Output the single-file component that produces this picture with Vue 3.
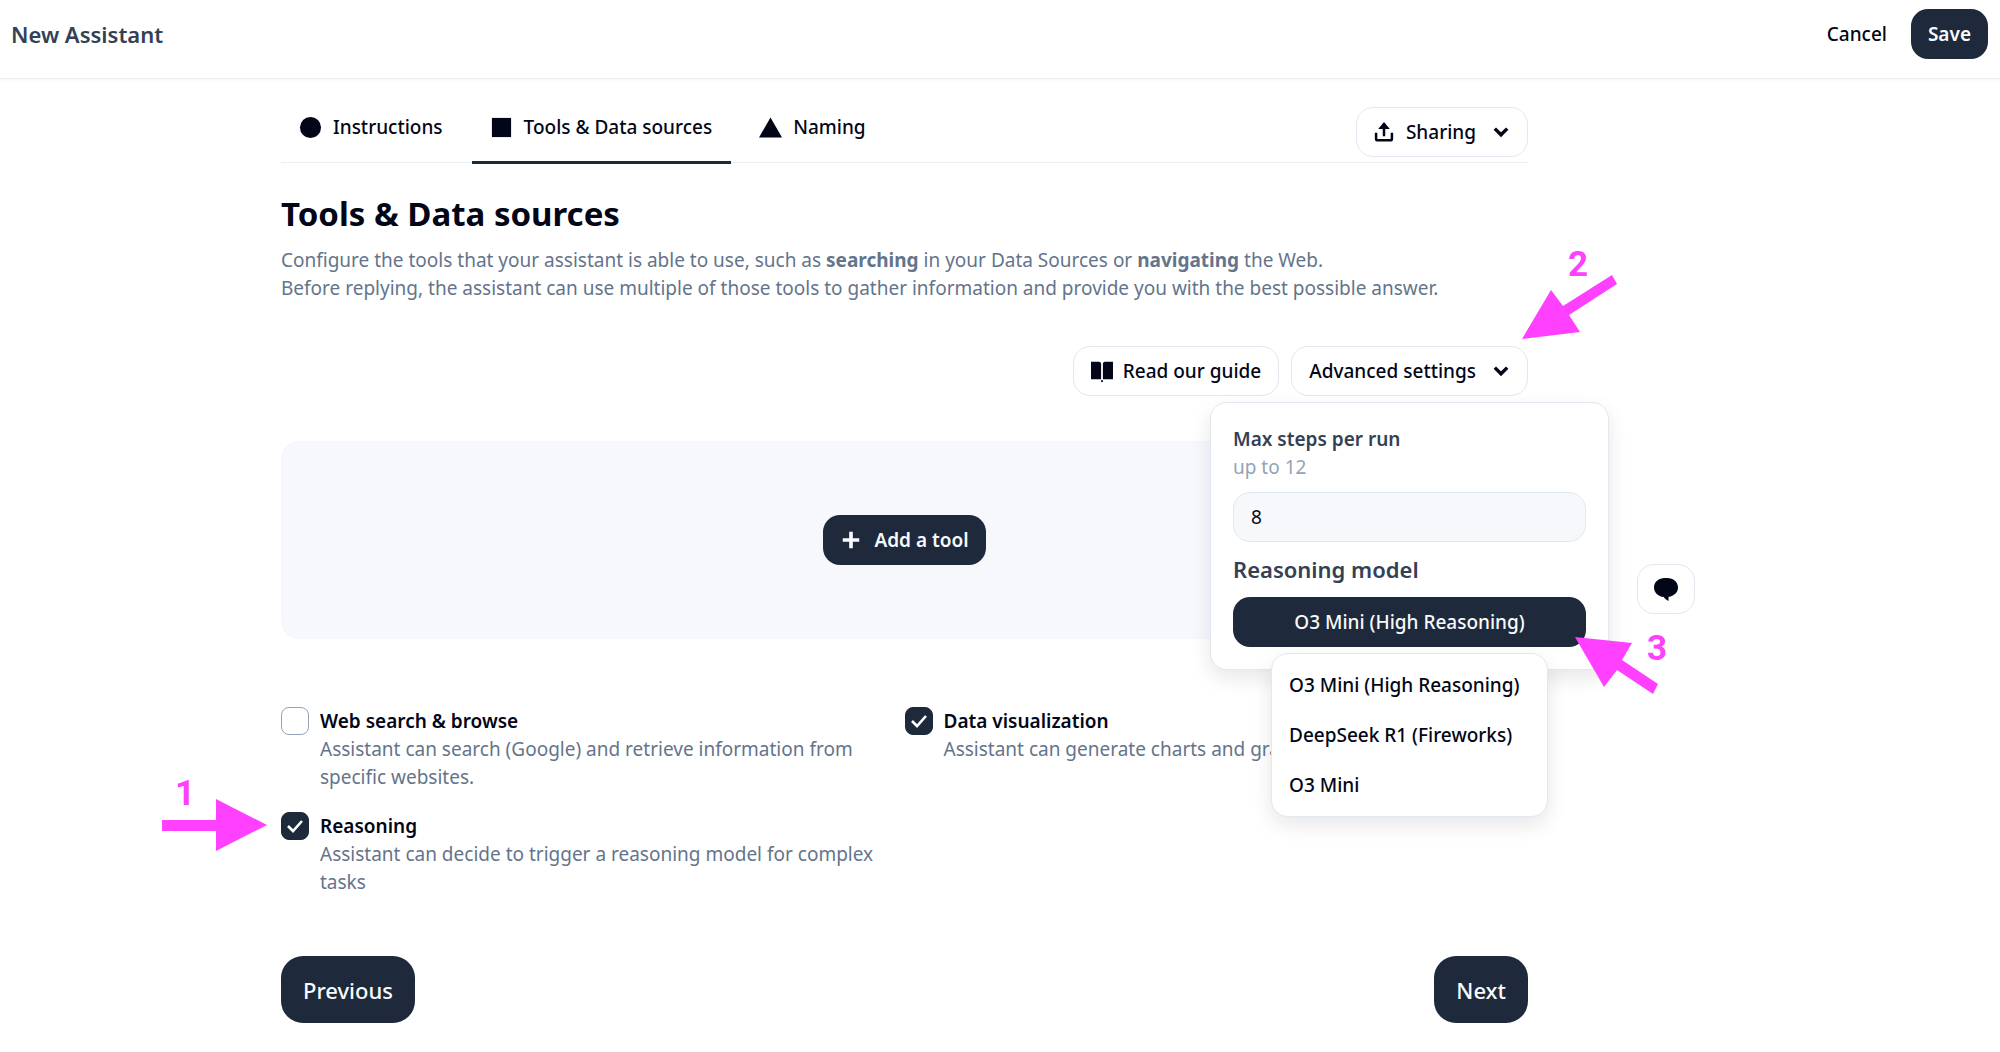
<script setup>
import { ref } from 'vue'

const tabs = [
  { id: 'instructions', label: 'Instructions' },
  { id: 'tools', label: 'Tools & Data sources' },
  { id: 'naming', label: 'Naming' },
]
const activeTab = ref('tools')

const capabilities = ref([
  {
    id: 'web',
    label: 'Web search & browse',
    text: 'Assistant can search (Google) and retrieve information from specific websites.',
    on: false,
  },
  {
    id: 'viz',
    label: 'Data visualization',
    text: 'Assistant can generate charts and graphs.',
    on: true,
  },
  {
    id: 'reasoning',
    label: 'Reasoning',
    text: 'Assistant can decide to trigger a reasoning model for complex tasks',
    on: true,
  },
])

const maxSteps = ref('8')
const models = ['O3 Mini (High Reasoning)', 'DeepSeek R1 (Fireworks)', 'O3 Mini']
const model = ref(models[0])
</script>

<template>
  <div class="page">
    <header class="topbar">
      <h2 class="topbar-title">New Assistant</h2>
      <div class="topbar-actions">
        <button type="button" class="btn-ghost">Cancel</button>
        <button type="button" class="btn btn-dark">Save</button>
      </div>
    </header>

    <div class="layout">
      <main class="main">
        <div class="tabbar">
          <nav class="tabs">
            <button
              v-for="t in tabs"
              :key="t.id"
              type="button"
              class="tab"
              :class="{ active: activeTab === t.id }"
              @click="activeTab = t.id"
            >
              <svg class="tab-icon" viewBox="0 0 24 24" aria-hidden="true">
                <circle v-if="t.id === 'instructions'" cx="12" cy="12" r="11" />
                <rect v-else-if="t.id === 'tools'" x="2" y="2" width="20" height="20" />
                <path v-else d="M12 1.500L24 22.500H0Z" />
              </svg>
              {{ t.label }}
            </button>
          </nav>
          <button type="button" class="btn btn-light">
            <svg class="share-icon" viewBox="0 0 24 24" aria-hidden="true">
              <path
                d="M12 17V6M2.500 13v7a2 2 0 0 0 2 2h15a2 2 0 0 0 2-2v-7"
                fill="none"
                stroke="currentColor"
                stroke-width="3"
              />
              <path d="M12 0L19 8.500H5Z" />
            </svg>
            Sharing
            <svg class="chevron" viewBox="0 0 16 16" aria-hidden="true">
              <path d="M2.500 5L8 10.500 13.500 5" />
            </svg>
          </button>
        </div>

        <section class="intro">
          <h1>Tools &amp; Data sources</h1>
          <p>
            Configure the tools that your assistant is able to use, such as <b>searching</b> in your
            Data Sources or <b>navigating</b> the Web.<br />
            Before replying, the assistant can use multiple of those tools to gather information and
            provide you with the best possible answer.
          </p>
        </section>

        <div class="toolbar">
          <button type="button" class="btn btn-light guide">
            <svg class="icon" viewBox="0 0 24 24" aria-hidden="true">
              <path
                d="M0 2h8.500a3 3 0 0 1 2.500 1.500V21H0zM24 2h-8.500a3 3 0 0 0-2.500 1.500V21h11zM11 22h2v2h-2z"
              />
            </svg>
            Read our guide
          </button>
          <div class="advanced">
            <button type="button" class="btn btn-light" aria-expanded="true">
              Advanced settings
              <svg class="chevron" viewBox="0 0 16 16" aria-hidden="true">
                <path d="M2.500 5L8 10.500 13.500 5" />
              </svg>
            </button>
            <div class="popover">
              <label class="field-title" for="max-steps">Max steps per run</label>
              <span class="hint">up to 12</span>
              <input id="max-steps" v-model="maxSteps" class="field" type="text" />
              <h3 id="model-title" class="model-title">Reasoning model</h3>
              <div class="picker">
                <button
                  type="button"
                  class="btn btn-dark picker-button"
                  aria-haspopup="menu"
                  aria-describedby="model-title"
                >
                  {{ model }}
                </button>
                <div class="menu" role="menu">
                  <button
                    v-for="m in models"
                    :key="m"
                    type="button"
                    role="menuitem"
                    class="menu-item"
                    @click="model = m"
                  >
                    {{ m }}
                  </button>
                </div>
                <div class="mark mark-three" aria-hidden="true">
                  <svg width="84" height="58" viewBox="0 0 84 58">
                    <path d="M0 0L57 6 47 23 83 47 78 57 42 33 29 50Z" />
                  </svg>
                  <span class="mark-number">3</span>
                </div>
              </div>
            </div>
            <div class="mark mark-two" aria-hidden="true">
              <svg width="96" height="65" viewBox="0 0 96 65">
                <path d="M0 64L29 15 41 31 90 0 95 9 47 40 58 57Z" />
              </svg>
              <span class="mark-number">2</span>
            </div>
          </div>
        </div>

        <section class="empty">
          <button type="button" class="btn btn-dark">
            <svg class="icon" viewBox="0 0 24 24" aria-hidden="true">
              <path d="M12 3v18M3 12h18" fill="none" stroke="currentColor" stroke-width="4" />
            </svg>
            Add a tool
          </button>
        </section>

        <section class="capabilities">
          <div v-for="c in capabilities" :key="c.id" class="capability">
            <span class="check">
              <input :id="c.id" v-model="c.on" type="checkbox" :aria-describedby="c.id + '-text'" />
              <svg v-if="c.on" viewBox="0 0 28 28" aria-hidden="true">
                <path d="M7 14l5 5L21 9" />
              </svg>
            </span>
            <div>
              <label :for="c.id">{{ c.label }}</label>
              <p :id="c.id + '-text'">{{ c.text }}</p>
            </div>
            <div v-if="c.id === 'reasoning'" class="mark mark-one" aria-hidden="true">
              <svg width="105" height="52" viewBox="0 0 105 52">
                <path d="M0 21H54V0L105 26 54 52V32H0Z" />
              </svg>
              <span class="mark-number">1</span>
            </div>
          </div>
        </section>

        <footer class="pager">
          <button type="button" class="btn-large">Previous</button>
          <button type="button" class="btn-large">Next</button>
        </footer>
      </main>

      <aside class="side">
        <button type="button" class="btn btn-light" aria-label="Open chat">
          <svg class="chat-icon" viewBox="0 0 24 24" aria-hidden="true">
            <path
              d="M11 1h2c6.500 0 11 4 11 9.500 0 5-4 8.500-9.500 9.500v4C12 22.800 10.500 21.500 9.800 20 4 19.500 0 15.500 0 10.500 0 5 4.500 1 11 1z"
            />
          </svg>
        </button>
      </aside>
    </div>
  </div>
</template>

<style>
body {
  margin: 0;
  background: #fff;
}
</style>

<style scoped>
.page {
  font-family: 'Noto Sans', 'Open Sans', sans-serif;
  font-size: 19px;
  line-height: 28px;
  color: #020617;
}
*,
*::before,
*::after {
  box-sizing: border-box;
}
h1,
h2,
h3,
p {
  margin: 0;
}
button,
input {
  font: inherit;
  color: inherit;
}
button {
  border: 0;
  background: none;
  padding: 0;
  cursor: pointer;
  white-space: nowrap;
}
svg {
  display: block;
  flex: none;
  fill: currentColor;
}

.topbar {
  display: flex;
  align-items: flex-start;
  justify-content: space-between;
  height: 79px;
  padding: 9px 12px 0 11px;
  border-bottom: 1px solid #eceef1;
  box-shadow: 0 1px 3px rgba(15, 23, 42, 0.04);
}
.topbar-title {
  font-size: 22px;
  line-height: 50px;
  font-weight: 600;
  color: #334155;
}
.topbar-actions {
  display: flex;
  align-items: center;
  gap: 24px;
}
.btn-ghost {
  font-weight: 500;
}

.btn {
  display: flex;
  align-items: center;
  justify-content: center;
  gap: 12px;
  height: 50px;
  padding: 0 17px;
  border-radius: 17px;
  font-weight: 500;
}
.btn-light {
  border: 1px solid #e2e8f0;
  background: #fff;
}
.btn-dark {
  background: #1e293b;
  color: #f8fafc;
  font-weight: 600;
}
.icon {
  width: 22px;
  height: 22px;
}
.share-icon {
  width: 20px;
  height: 20px;
}
.chevron {
  width: 18px;
  height: 18px;
  margin-left: 4px;
}
.chevron path {
  fill: none;
  stroke: currentColor;
  stroke-width: 3;
}

.layout {
  display: grid;
  grid-template-columns: 281fr 1247fr 472fr;
}
.main {
  grid-column: 2;
  min-width: 0;
  padding-top: 28px;
}
.tabbar {
  display: flex;
  justify-content: space-between;
  align-items: flex-start;
  height: 56px;
  border-bottom: 1px solid #e9eef5;
}
.tabs {
  display: flex;
  gap: 10px;
}
.tab {
  display: flex;
  align-items: center;
  gap: 11px;
  height: 57px;
  padding: 0 19px 14px 18px;
  border-bottom: 3px solid transparent;
  font-weight: 500;
}
.tab.active {
  border-color: #1e293b;
}
.tab-icon {
  width: 23px;
  height: 23px;
}

.intro h1 {
  margin-top: 27px;
  font-size: 33px;
  line-height: 48px;
  font-weight: 700;
}
.intro p {
  margin-top: 8px;
  color: #64748b;
}

.toolbar {
  display: flex;
  justify-content: flex-end;
  gap: 12px;
  margin-top: 44px;
}
.guide {
  gap: 10px;
}
.advanced,
.picker {
  position: relative;
}
.popover {
  position: absolute;
  z-index: 2;
  top: 56px;
  right: -81px;
  display: flex;
  flex-direction: column;
  width: 399px;
  padding: 22px;
  border: 1px solid #e2e8f0;
  border-radius: 17px;
  background: #fff;
  box-shadow: 0 8px 20px rgba(15, 23, 42, 0.1);
}
.field-title {
  font-weight: 600;
  color: #334155;
}
.hint {
  color: #94a3b8;
}
.field {
  width: 100%;
  height: 50px;
  margin-top: 11px;
  padding: 0 17px;
  border: 1px solid #e2e8f0;
  border-radius: 17px;
  background: #f6f8fc;
  outline: 0;
}
.model-title {
  margin: 13px 0 14px;
  font-size: 22px;
  line-height: 28px;
  font-weight: 600;
  color: #334155;
}
.picker-button {
  width: 100%;
  font-weight: 500;
}
.menu {
  position: absolute;
  z-index: 1;
  top: 56px;
  left: 38px;
  right: 38px;
  display: flex;
  flex-direction: column;
  padding: 6px 17px;
  border: 1px solid #e2e8f0;
  border-radius: 17px;
  background: #fff;
  box-shadow: 0 8px 20px rgba(15, 23, 42, 0.1);
}
.menu-item {
  height: 50px;
  text-align: left;
  font-weight: 500;
}

.empty {
  display: flex;
  align-items: center;
  justify-content: center;
  height: 198px;
  margin-top: 45px;
  border-radius: 17px;
  background: #f6f8fc;
}

.capabilities {
  display: grid;
  grid-template-columns: 1fr 1fr;
  row-gap: 21px;
  margin-top: 68px;
}
.capability {
  position: relative;
  display: flex;
  gap: 11px;
  padding-right: 24px;
}
.capability label {
  font-weight: 600;
}
.capability p {
  color: #64748b;
}
.check {
  position: relative;
  flex: none;
  width: 28px;
  height: 28px;
}
.check input {
  appearance: none;
  display: block;
  width: 28px;
  height: 28px;
  margin: 0;
  border: 1px solid #94a3b8;
  border-radius: 8px;
  background: #fff;
}
.check input:checked {
  border-color: #1e293b;
  background: #1e293b;
}
.check svg {
  position: absolute;
  inset: 0;
  pointer-events: none;
}
.check path {
  fill: none;
  stroke: #fff;
  stroke-width: 2.600;
}

.pager {
  display: flex;
  justify-content: space-between;
  margin-top: 60px;
  padding-bottom: 29px;
}
.btn-large {
  height: 67px;
  padding: 0 22px;
  border-radius: 22px;
  background: #1e293b;
  color: #f8fafc;
  font-size: 22px;
  font-weight: 500;
}

.side {
  padding: 485px 0 0 109px;
}
.chat-icon {
  width: 24px;
  height: 24px;
}
.side .btn {
  padding: 0 16px;
}

/* Numbered callouts that point at the three steps */
.mark {
  position: absolute;
  z-index: 3;
  color: #ff40ff;
  pointer-events: none;
}
.mark-number {
  position: absolute;
  font-family: Roboto, 'Liberation Sans', sans-serif;
  font-size: 35px;
  line-height: 36px;
  font-weight: 700;
}
.mark-one {
  left: -119px;
  top: -13px;
}
.mark-one .mark-number {
  left: 13px;
  top: -23px;
}
.mark-two {
  right: -90px;
  top: -71px;
}
.mark-two .mark-number {
  left: 46px;
  top: -28px;
}
.mark-three {
  right: -73px;
  top: 40px;
}
.mark-three .mark-number {
  left: 72px;
  top: -6px;
}
</style>
